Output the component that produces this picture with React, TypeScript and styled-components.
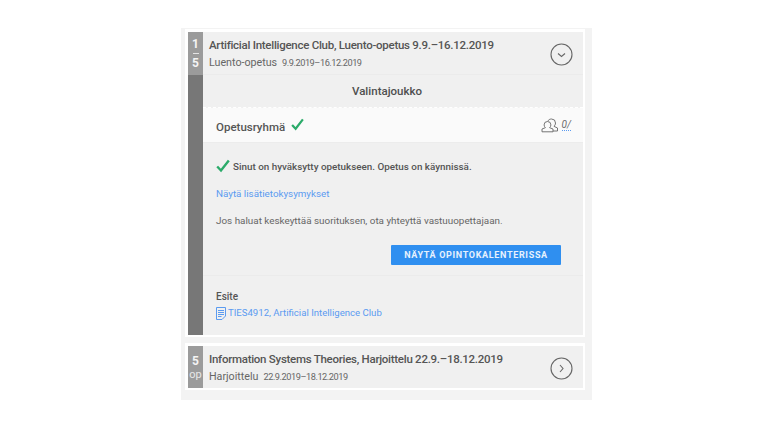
import React from "react";
import styled, { createGlobalStyle } from "styled-components";

const GlobalStyle = createGlobalStyle`
  html, body {
    margin: 0;
    background: #fff;
    font-family: Roboto, "Noto Sans", sans-serif;
    color: #555;
  }
`;

const Check = ({ size = 14 }: { size?: number }) => (
  <svg width={size} height={size} viewBox="0 0 14 14" fill="none">
    <path d="M1.2 7.5 L5 11.5 L12.8 1.5" stroke="#2bab6a" strokeWidth="2.4" />
  </svg>
);

const Chevron = ({ open }: { open?: boolean }) => (
  <CircleButton>
    <svg width="23" height="23" viewBox="0 0 23 23" fill="none">
      <circle cx="11.5" cy="11.5" r="10.5" stroke="#666" strokeWidth="1.1" />
      {open ? (
        <path d="M8 10.5 L11.5 13.5 L15 10.5" stroke="#666" strokeWidth="1.1" />
      ) : (
        <path d="M10 8 L13 11.5 L10 15" stroke="#666" strokeWidth="1.1" />
      )}
    </svg>
  </CircleButton>
);

const App = () => {
  return (
    <Page>
      <GlobalStyle />
      <Panel>
        <Card>
          <Credits>
            <CreditBadge>
              <CreditNum>1</CreditNum>
              <CreditDash />
              <CreditNum>5</CreditNum>
            </CreditBadge>
            <CreditFill />
          </Credits>
          <Content>
            <Header>
              <HeaderText>
                <Title>Artificial Intelligence Club, Luento-opetus 9.9.–16.12.2019</Title>
                <Sub>
                  Luento-opetus<SubDate>9.9.2019–16.12.2019</SubDate>
                </Sub>
              </HeaderText>
              <Chevron open />
            </Header>
            <GroupTitle>Valintajoukko</GroupTitle>
            <GroupRow>
              <GroupName>Opetusryhmä</GroupName>
              <GroupCheck>
                <Check size={13} />
              </GroupCheck>
              <Seats>
                <svg width="18" height="15" viewBox="0 0 18 15" fill="none" stroke="#666" strokeWidth="0.9">
                  <path d="M10.5 1 a4 4 0 0 1 4 4 c0 1.5 -0.7 2.6 -1.6 3.3 L16.5 10 V13 H12" />
                  <path d="M6.8 3.2 C7.4 1.8 8.8 1 10.5 1" />
                  <path d="M6.5 3.5 a3.4 3.4 0 0 1 3.4 3.4 c0 1.2 -0.6 2.2 -1.3 2.8 L12 11 V13.8 H1 V11 L4.4 9.7 C3.7 9.1 3.1 8.1 3.1 6.9 A3.4 3.4 0 0 1 6.5 3.5 Z" />
                </svg>
                <SeatCount>0/</SeatCount>
              </Seats>
            </GroupRow>
            <Body>
              <Status>
                <Check size={14} />
                <StatusText>Sinut on hyväksytty opetukseen. Opetus on käynnissä.</StatusText>
              </Status>
              <BodyLink>Näytä lisätietokysymykset</BodyLink>
              <Note>Jos haluat keskeyttää suorituksen, ota yhteyttä vastuuopettajaan.</Note>
              <Actions>
                <CalendarButton>NÄYTÄ OPINTOKALENTERISSA</CalendarButton>
              </Actions>
            </Body>
            <Brochure>
              <BrochureTitle>Esite</BrochureTitle>
              <BrochureLink>
                <svg width="10" height="13" viewBox="0 0 10 13" fill="none" stroke="#5b9bf0" strokeWidth="1">
                  <path d="M0.5 0.5 H9.5 V9 L6 12.5 H0.5 Z" />
                  <path d="M2 3.5 H8 M2 5.5 H8 M2 7.5 H8 M2 9.5 H5.5" />
                </svg>
                TIES4912, Artificial Intelligence Club
              </BrochureLink>
            </Brochure>
          </Content>
        </Card>
        <Card>
          <Credits>
            <SmallBadge>
              <CreditNum>5</CreditNum>
              <CreditUnit>op</CreditUnit>
            </SmallBadge>
          </Credits>
          <Content>
            <Header $last>
              <HeaderText>
                <Title>Information Systems Theories, Harjoittelu 22.9.–18.12.2019</Title>
                <Sub>
                  Harjoittelu<SubDate>22.9.2019–18.12.2019</SubDate>
                </Sub>
              </HeaderText>
              <Chevron />
            </Header>
          </Content>
        </Card>
      </Panel>
    </Page>
  );
};

export default App;

const Page = styled.div`
  width: 768px;
  height: 432px;
  padding: 28px 0 0 181px;
  box-sizing: border-box;
  overflow: hidden;
`;

const Panel = styled.div`
  width: 411px;
  height: 372px;
  box-sizing: border-box;
  background: #f3f3f3;
  padding: 1px 7px 0 4px;
  display: flex;
  flex-direction: column;
  gap: 6px;
`;

const Card = styled.div`
  display: flex;
  background: #f0f0f0;
  border: solid #fff;
  border-width: 3px 2px 2px 3px;
`;

const Credits = styled.div`
  width: 15px;
  flex-shrink: 0;
  display: flex;
  flex-direction: column;
`;

const CreditBadge = styled.div`
  height: 43px;
  background: #9b9b9b;
  color: #f4f4f4;
  display: flex;
  flex-direction: column;
  align-items: center;
  justify-content: center;
`;

const SmallBadge = styled(CreditBadge)`
  height: 42px;
  padding-top: 1px;
  box-sizing: border-box;
`;

const CreditFill = styled.div`
  flex: 1;
  background: #777;
`;

const CreditNum = styled.span`
  font-size: 12px;
  line-height: 12px;
  font-weight: 700;
`;

const CreditDash = styled.span`
  width: 6px;
  height: 1px;
  margin: 3px 0;
  background: #e4e4e4;
`;

const CreditUnit = styled.span`
  font-size: 11px;
  line-height: 12px;
  margin-top: 2px;
  color: #e8e8e8;
`;

const Content = styled.div`
  flex: 1;
  min-width: 0;
`;

const Header = styled.div<{ $last?: boolean }>`
  height: ${(p) => (p.$last ? "42px" : "43px")};
  box-sizing: border-box;
  padding: 5px 10px 0 6px;
  display: flex;
  justify-content: space-between;
  border-bottom: ${(p) => (p.$last ? "0" : "1px solid #ebebeb")};
`;

const HeaderText = styled.div``;

const Title = styled.div`
  font-size: 11.5px;
  line-height: 16px;
  font-weight: 500;
  letter-spacing: -0.27px;
  color: #555;
  white-space: nowrap;
`;

const Sub = styled.div`
  margin-top: 3px;
  font-size: 10.7px;
  line-height: 14px;
  color: #666;
  white-space: nowrap;
`;

const SubDate = styled.span`
  margin-left: 5px;
  font-size: 9.2px;
  letter-spacing: -0.45px;
`;

const CircleButton = styled.div`
  margin-top: 6px;
  height: 23px;
`;

const GroupTitle = styled.div`
  height: 33px;
  box-sizing: border-box;
  padding-right: 12px;
  border-bottom: 1px dashed #fff;
  text-align: center;
  font-size: 11.5px;
  line-height: 33px;
  font-weight: 500;
  color: #4f4f4f;
`;

const GroupRow = styled.div`
  height: 35px;
  box-sizing: border-box;
  padding: 0 12px 0 13px;
  background: #fafafa;
  border-bottom: 1px solid #ececec;
  display: flex;
  align-items: center;
  gap: 6px;
`;

const GroupName = styled.span`
  padding-top: 3px;
  font-size: 11.5px;
  font-weight: 500;
  color: #555;
`;

const GroupCheck = styled.span`
  display: flex;
  margin-bottom: 2px;
`;

const Seats = styled.div`
  margin-left: auto;
  display: flex;
  align-items: center;
  gap: 3px;
`;

const SeatCount = styled.span`
  font-size: 10px;
  font-style: italic;
  color: #6b6b6b;
  border-bottom: 1px dotted #5b9bf0;
`;

const Body = styled.div`
  padding: 15px 22px 0 13px;
  height: 133px;
  box-sizing: border-box;
  border-bottom: 1px solid #ebebeb;
`;

const Status = styled.div`
  display: flex;
  align-items: center;
  gap: 3px;
  height: 16px;
`;

const StatusText = styled.span`
  font-size: 9.85px;
  font-weight: 500;
  color: #555;
  white-space: nowrap;
`;

const BodyLink = styled.div`
  margin-top: 13px;
  font-size: 9.8px;
  line-height: 13px;
  color: #5b9bf0;
`;

const Note = styled.div`
  margin-top: 14px;
  font-size: 9.9px;
  line-height: 13px;
  color: #666;
  white-space: nowrap;
`;

const Actions = styled.div`
  margin-top: 18px;
  display: flex;
  justify-content: flex-end;
`;

const CalendarButton = styled.button`
  width: 170px;
  height: 20px;
  padding: 0;
  border: 0;
  border-radius: 1px;
  background: #2f8ff0;
  color: #e6f1fd;
  font-family: inherit;
  font-size: 9px;
  font-weight: 700;
  letter-spacing: 0.67px;
`;

const Brochure = styled.div`
  height: 59px;
  box-sizing: border-box;
  padding: 14px 13px 0;
`;

const BrochureTitle = styled.div`
  font-size: 10px;
  line-height: 14px;
  font-weight: 500;
  color: #555;
`;

const BrochureLink = styled.div`
  margin-top: 2px;
  display: flex;
  align-items: center;
  gap: 2px;
  font-size: 9.6px;
  line-height: 14px;
  color: #5b9bf0;
`;
